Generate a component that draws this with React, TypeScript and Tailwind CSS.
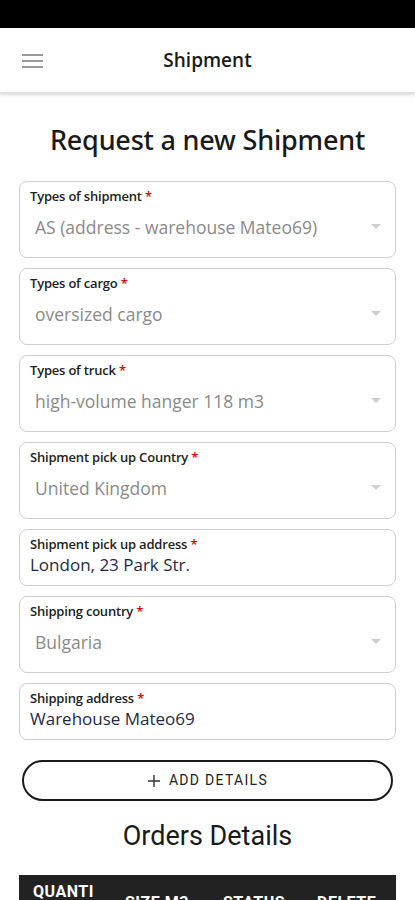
import React from "react";

const body = { fontFamily: '"Open Sans", "Noto Sans", sans-serif' };
const roboto = { fontFamily: 'Roboto, "Noto Sans", sans-serif' };

function Caret() {
  return (
    <svg width="10" height="6" viewBox="0 0 10 6" className="shrink-0">
      <path d="M0 0 L10 0 L5 5 Z" fill="#cfcfcf" />
    </svg>
  );
}

function SelectField({ label, value }: { label: string; value: string }) {
  return (
    <div className="h-[77px] rounded-[8px] border border-[#cfcfcf] px-[10px] pt-[5px] flex flex-col">
      <div className="text-[13px] leading-[18px] font-semibold text-[#222] tracking-[-0.2px]">
        {label} <span className="text-[#e00000]">*</span>
      </div>
      <div className="flex items-center justify-between pl-[5px] pr-[4px] mt-[10px]">
        <span className="text-[17.5px] leading-[24px] text-[#8a8a8a]">{value}</span>
        <Caret />
      </div>
    </div>
  );
}

function InputField({ label, value }: { label: string; value: string }) {
  return (
    <div className="h-[57px] rounded-[8px] border border-[#cfcfcf] px-[10px] pt-[5px] flex flex-col">
      <div className="text-[13px] leading-[18px] font-semibold text-[#222] tracking-[-0.2px]">
        {label} <span className="text-[#e00000]">*</span>
      </div>
      <div className="text-[17px] leading-[24px] text-[#1f2a44]">{value}</div>
    </div>
  );
}

export default function App() {
  return (
    <div className="w-[415px] h-[900px] overflow-hidden bg-white" style={body}>
      <div className="h-[28px] bg-black" />
      <div className="relative h-[65px] bg-white flex items-center justify-center shadow-[0_2px_3px_rgba(0,0,0,0.15)] border-b border-[#e4e4e4]">
        <div className="absolute left-[22px] top-[26px] flex flex-col gap-[4px]">
          <div className="w-[21px] h-[2px] bg-[#9a9a9a]" />
          <div className="w-[21px] h-[2px] bg-[#9a9a9a]" />
          <div className="w-[21px] h-[2px] bg-[#9a9a9a]" />
        </div>
        <span className="text-[19px] font-semibold text-[#1a1a1a]">Shipment</span>
      </div>
      <div className="px-[19px]">
        <h1
          className="text-center text-[27px] leading-[34px] font-[500] text-[#1a1a1a] mt-[30px] mb-[24px] tracking-[-0.2px]"
          style={{ fontFamily: '"Noto Sans", "Open Sans", sans-serif' }}
        >
          Request a new Shipment
        </h1>
        <div className="flex flex-col gap-[10px]">
          <SelectField label="Types of shipment" value="AS (address - warehouse Mateo69)" />
          <SelectField label="Types of cargo" value="oversized cargo" />
          <SelectField label="Types of truck" value="high-volume hanger 118 m3" />
          <SelectField label="Shipment pick up Country" value="United Kingdom" />
          <InputField label="Shipment pick up address" value="London, 23 Park Str." />
          <SelectField label="Shipping country" value="Bulgaria" />
          <InputField label="Shipping address" value="Warehouse Mateo69" />
        </div>
        <div className="px-[3px] mt-[20px]">
          <button
            className="w-full h-[41px] rounded-full border-2 border-[#1a1a1a] flex items-center justify-center gap-[8px] text-[14px] tracking-[1.3px] text-[#222]"
            style={roboto}
          >
            <svg width="14" height="14" viewBox="0 0 14 14">
              <path d="M7 1 V13 M1 7 H13" stroke="#333" strokeWidth="1.4" />
            </svg>
            ADD DETAILS
          </button>
        </div>
        <div className="text-center text-[27px] leading-[34px] text-[#1a1a1a] mt-[18px]" style={roboto}>
          Orders Details
        </div>
        <div className="mt-[22px] bg-[#222] h-[60px] flex items-start text-white font-bold text-[16px] tracking-[0.5px]" style={roboto}>
          <div className="w-[100px] pl-[14px] pt-[8px] leading-[18px]">QUANTI<br />TY</div>
          <div className="w-[96px] pt-[16px] pl-[6px]">SIZE M3</div>
          <div className="w-[96px] pt-[16px] pl-[8px]">STATUS</div>
          <div className="flex-1 pt-[16px] pl-[6px]">DELETE</div>
        </div>
      </div>
    </div>
  );
}
